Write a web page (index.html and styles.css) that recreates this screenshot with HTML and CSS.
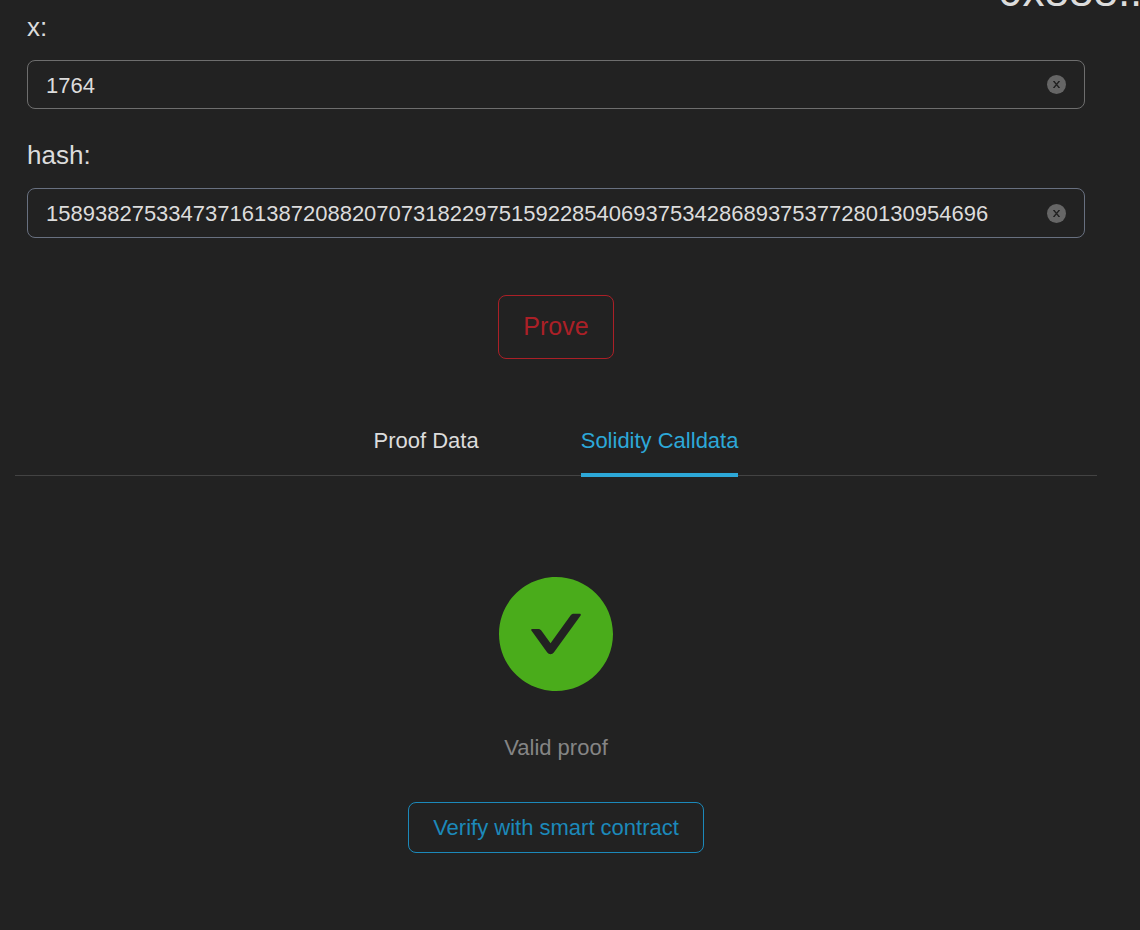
FILE: index.html
```html
<!DOCTYPE html>
<html lang="en">
<head>
<meta charset="utf-8">
<title>Prover</title>
<link rel="stylesheet" href="styles.css">
</head>
<body>
<div class="account">0x888..</div>
<main class="page">
  <form class="form">
    <label class="label" for="x">x:</label>
    <div class="field">
      <input class="input" id="x" type="text" value="1764">
      <button class="clear" type="button" aria-label="Clear x"><svg viewBox="0 0 19 19"><circle cx="9.500" cy="9.500" r="9.500" fill="#666"/><path d="M7 6.500L12 12.500M12 6.500L7 12.500" stroke="#222" stroke-width="1.300"/><path d="M6 6.500h2M11 6.500h2M6 12.500h2M11 12.500h2" stroke="#222" stroke-width="0.800"/></svg></button>
    </div>
    <label class="label" for="hash">hash:</label>
    <div class="field field-hash">
      <input class="input" id="hash" type="text" value="15893827533473716138720882070731822975159228540693753428689375377280130954696">
      <button class="clear" type="button" aria-label="Clear hash"><svg viewBox="0 0 19 19"><circle cx="9.500" cy="9.500" r="9.500" fill="#666"/><path d="M7 6.500L12 12.500M12 6.500L7 12.500" stroke="#222" stroke-width="1.300"/><path d="M6 6.500h2M11 6.500h2M6 12.500h2M11 12.500h2" stroke="#222" stroke-width="0.800"/></svg></button>
    </div>
    <button class="button prove" type="button">Prove</button>
  </form>
  <nav class="tabs" role="tablist">
    <button class="tab" type="button" role="tab" aria-selected="false">Proof Data</button>
    <button class="tab active" type="button" role="tab" aria-selected="true">Solidity Calldata</button>
  </nav>
  <section class="result">
    <svg class="status" viewBox="64 64 896 896" aria-hidden="true"><path fill="#4aac1b" d="M512 64C264.600 64 64 264.600 64 512s200.600 448 448 448 448-200.600 448-448S759.400 64 512 64zm193.500 301.700l-210.600 292a31.800 31.800 0 0 1-51.700 0L318.500 484.900c-3.800-5.300 0-12.700 6.500-12.700h46.900c10.200 0 19.900 4.900 25.900 13.300l71.200 98.800 157.200-218c6-8.300 15.600-13.300 25.900-13.300H699c6.500 0 10.300 7.400 6.500 12.700z"/></svg>
    <p class="message">Valid proof</p>
    <button class="button verify" type="button">Verify with smart contract</button>
  </section>
</main>
</body>
</html>
```
FILE: styles.css
```css
* { box-sizing: border-box; }
body {
  margin: 0;
  background: #222;
  color: #dcdcdc;
  font-family: "Liberation Sans", Arial, sans-serif;
  font-size: 22px;
  line-height: 34px;
  overflow: hidden;
}
button, input { font: inherit; color: inherit; background: none; margin: 0; }
.account {
  position: absolute;
  top: -33px;
  left: calc(100% - 142px);
  font-size: 44px;
  line-height: 48px;
  white-space: nowrap;
}
.page { padding: 10px 43px 0 15px; }
.form { display: flex; flex-direction: column; padding: 0 12px; }
.label { font-size: 26px; line-height: 34px; margin-bottom: 16px; }
.field {
  display: flex;
  align-items: center;
  height: 49px;
  padding: 0 18px;
  border: 1px solid #6e6e6e;
  border-radius: 8px;
  margin-bottom: 29px;
}
.field-hash { height: 50px; border-color: #687080; margin-bottom: 57px; }
.input { flex: 1; min-width: 0; border: 0; padding: 2px 0 0; outline: 0; height: 36px; }
.clear { display: block; flex: none; width: 19px; height: 19px; padding: 0; border: 0; }
.clear svg { display: block; }
.button { align-self: center; border: 1px solid; border-radius: 8px; padding: 0 24px; }
.prove { height: 64px; padding-bottom: 2px; font-size: 25px; color: #ab2027; }
.tabs {
  display: flex;
  justify-content: center;
  gap: 102px;
  margin-top: 55px;
  border-bottom: 1px solid #434343;
}
.tab { position: relative; border: 0; padding: 10px 0 17px; }
.active { color: #2da8d8; }
.active::after {
  content: "";
  position: absolute;
  left: 0;
  right: 0;
  bottom: -2px;
  height: 4px;
  background: #2da8d8;
}
.result { display: flex; flex-direction: column; align-items: center; padding: 101px 0 77px; }
.status { width: 114px; height: 114px; }
.message { margin: 40px 0 37px; color: #858585; }
.verify { height: 51px; color: #1c89ba; }
```
